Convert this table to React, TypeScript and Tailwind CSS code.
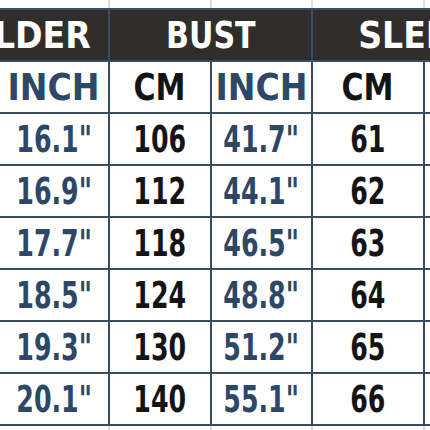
const font = { fontFamily: '"DejaVu Sans Condensed", "DejaVu Sans", sans-serif' };

const rows = [
  ["16.1\"", "106", "41.7\"", "61"],
  ["16.9\"", "112", "44.1\"", "62"],
  ["17.7\"", "118", "46.5\"", "63"],
  ["18.5\"", "124", "48.8\"", "64"],
  ["19.3\"", "130", "51.2\"", "65"],
  ["20.1\"", "140", "55.1\"", "66"],
];

const cols = "grid-cols-[128px_108px_100px_99px_110px_116px]";

// the chart uses a narrow DIN-like face, so squeeze the condensed font sideways
function Word({ children, wide }: { children: string; wide?: boolean }) {
  return (
    <span className={`inline-block whitespace-nowrap ${wide ? "scale-x-[0.97]" : "scale-x-[0.88]"}`}>
      {children}
    </span>
  );
}

function Num({ children }: { children: string }) {
  return <span className="inline-block scale-x-[0.74] whitespace-nowrap">{children}</span>;
}

function Filler({ h }: { h: string }) {
  return (
    <div className={`grid ${cols} gap-x-[2px] bg-[#dcdcdc] ${h}`}>
      {Array.from({ length: 6 }).map((_, i) => (
        <div key={i} className="bg-white" />
      ))}
    </div>
  );
}

export default function App() {
  return (
    <div className="w-[430px] h-[430px] overflow-hidden bg-white font-bold" style={font}>
      <div className="ml-[-130px] w-[680px]">
        <Filler h="h-[8px]" />
        <div className={`grid ${cols} gap-[2px] bg-[#3b4b61] py-[2px] auto-rows-[50px]`}>
          <div className="col-span-2 bg-[#302e2c] text-white text-[38px] flex items-center justify-center">
            <Word wide>SHOULDER</Word>
          </div>
          <div className="col-span-2 bg-[#302e2c] text-white text-[38px] flex items-center justify-center">
            <Word>BUST</Word>
          </div>
          <div className="col-span-2 bg-[#302e2c] text-white text-[38px] flex items-center justify-center">
            <Word wide>SLEEVE</Word>
          </div>

          {["CM", "INCH", "CM", "INCH", "CM", ""].map((t, i) => (
            <div
              key={i}
              className={`bg-white text-[38px] flex items-center justify-center ${t === "INCH" ? "text-[#2c4866]" : "text-[#141414]"}`}
            >
              <Word wide={t === "INCH"}>{t}</Word>
            </div>
          ))}

          {rows.map((r, ri) => (
            <div key={ri} className="contents">
              <div className={`bg-white ${ri === 5 ? "h-[49px]" : ""}`} />
              <div className="bg-white text-[38px] text-[#2c4866] flex items-center justify-center"><Num>{r[0]}</Num></div>
              <div className="bg-white text-[38px] text-[#141414] flex items-center justify-center"><Num>{r[1]}</Num></div>
              <div className="bg-white text-[38px] text-[#2c4866] flex items-center justify-center"><Num>{r[2]}</Num></div>
              <div className="bg-white text-[38px] text-[#141414] flex items-center justify-center"><Num>{r[3]}</Num></div>
              <div className="bg-white" />
            </div>
          ))}
        </div>
        <Filler h="h-[10px]" />
      </div>
    </div>
  );
}
